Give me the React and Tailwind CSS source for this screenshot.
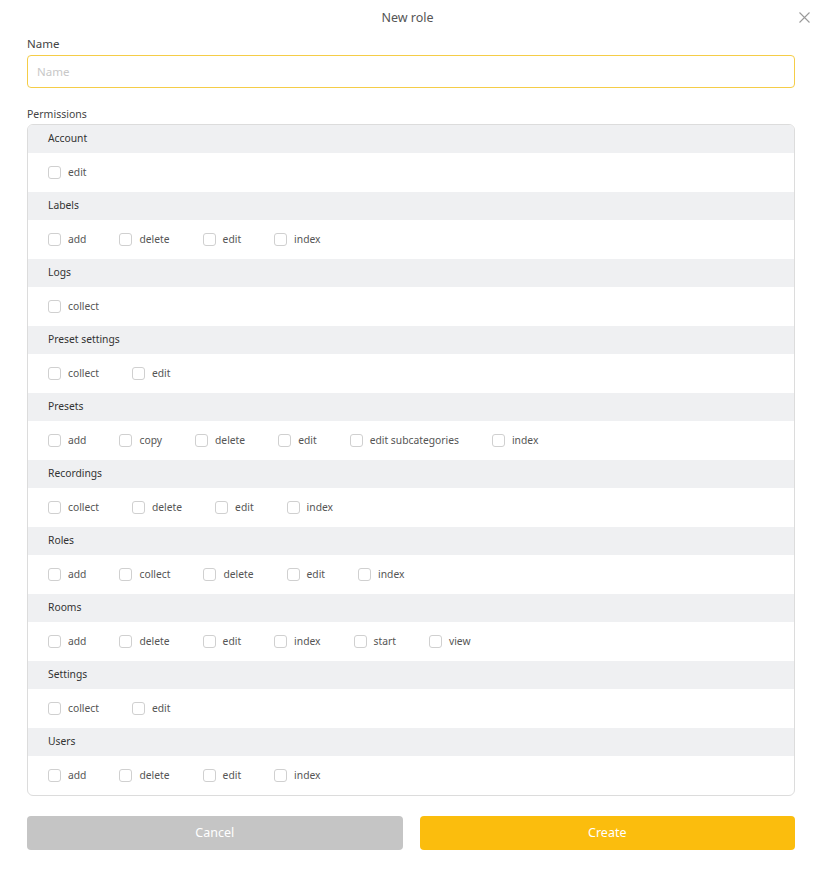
import React from "react";

const groups = [
  ["Account", ["edit"]],
  ["Labels", ["add", "delete", "edit", "index"]],
  ["Logs", ["collect"]],
  ["Preset settings", ["collect", "edit"]],
  ["Presets", ["add", "copy", "delete", "edit", "edit subcategories", "index"]],
  ["Recordings", ["collect", "delete", "edit", "index"]],
  ["Roles", ["add", "collect", "delete", "edit", "index"]],
  ["Rooms", ["add", "delete", "edit", "index", "start", "view"]],
  ["Settings", ["collect", "edit"]],
  ["Users", ["add", "delete", "edit", "index"]],
];

export default function App() {
  return (
    <div className="w-[815px] h-[878px] bg-white font-['Noto_Sans',sans-serif] text-[#333]">
      <div className="relative flex justify-center pt-[8px] h-[36px]">
        <span className="text-[12.5px] text-[#555] leading-[20px]">New role</span>
        <button className="absolute right-[4px] top-[10px] w-[14px] h-[14px] flex items-center justify-center">
          <svg width="11" height="11" viewBox="0 0 11 11" stroke="#9a9a9a" strokeWidth="1.1" fill="none">
            <path d="M0.5 0.5 L10.5 10.5 M10.5 0.5 L0.5 10.5" />
          </svg>
        </button>
      </div>
      <div className="pl-[27px] pr-[20px]">
        <div className="text-[11.5px] leading-[16px] text-[#444]">Name</div>
        <input
          placeholder="Name"
          className="mt-[3px] w-full h-[33px] border border-[#f5cd47] rounded-[4px] px-[9px] text-[11.5px] outline-none placeholder:text-[#c8c8c8]"
        />
        <div className="mt-[18px] text-[10.5px] leading-[16px] text-[#444]">Permissions</div>
        <div className="mt-[2px] border border-[#dcdcdc] rounded-[6px] overflow-hidden">
          {groups.map(([title, items]) => (
            <div key={title}>
              <div className="h-[28px] bg-[#eff0f2] flex items-center px-[20px] text-[10.3px] text-[#333]">{title}</div>
              <div className="h-[39px] flex items-center px-[20px] gap-[33px]">
                {items.map((it) => (
                  <label key={it} className="flex items-center gap-[7px] text-[10.3px] text-[#555]">
                    <span className="w-[13px] h-[13px] border border-[#d0d0d0] rounded-[3px] bg-white" />
                    <span>{it}</span>
                  </label>
                ))}
              </div>
            </div>
          ))}
        </div>
        <div className="mt-[20px] flex gap-[17px]">
          <button className="flex-1 h-[34px] rounded-[4px] bg-[#c5c5c5] text-white text-[12.5px]">Cancel</button>
          <button className="flex-1 h-[34px] rounded-[4px] bg-[#fbbd0d] text-white text-[12.5px]">Create</button>
        </div>
      </div>
    </div>
  );
}
